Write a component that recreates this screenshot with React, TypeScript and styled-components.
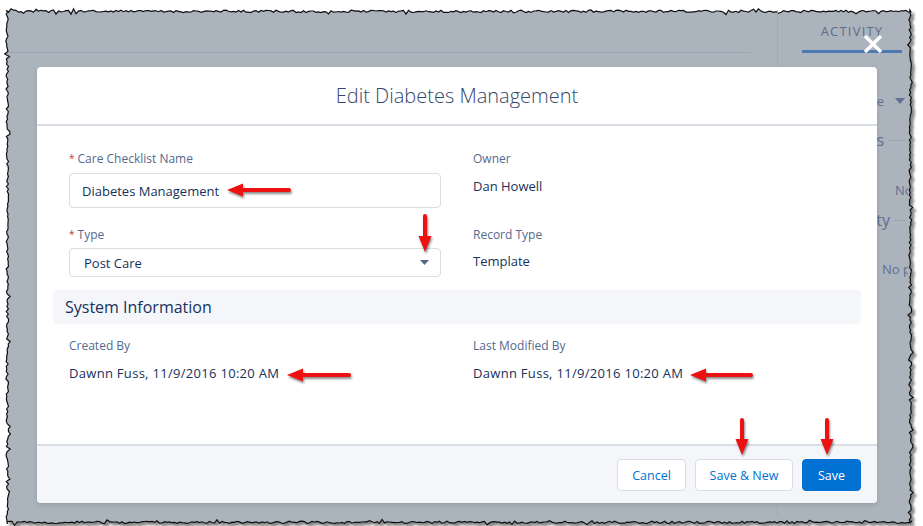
import React from 'react';
import styled, { createGlobalStyle } from 'styled-components';

const Global = createGlobalStyle`
  html, body { margin: 0; padding: 0; background: #ffffff; }
  body { font-family: "Open Sans", "Liberation Sans", sans-serif; }
  * { box-sizing: border-box; }
`;

const Page = styled.div`
  width: 923px;
  height: 526px;
  padding: 6px 11px 6px 6px;
  overflow: hidden;
`;

const Frame = styled.div`
  position: relative;
  width: 906px;
  height: 514px;
`;

const EdgeSvg = styled.svg`
  position: absolute;
  left: 0;
  top: 0;
  overflow: visible;
`;

const Screen = styled.div`
  position: relative;
  margin: 4px;
  width: 898px;
  height: 506px;
  overflow: hidden;
  display: grid;
  grid-template-columns: 767px minmax(0, 1fr);
`;

const LeftPane = styled.div`
  padding-right: 27px;
`;

const TopBand = styled.div`
  height: 43px;
  border-bottom: 1px solid #9da6b1;
`;

const RightPane = styled.div`
  min-width: 0;
  overflow: hidden;
  border-left: 1px solid #a1aab4;
  display: flex;
  flex-direction: column;
`;

const Tab = styled.div`
  margin-left: 24px;
  width: 100px;
  height: 43px;
  padding-top: 2px;
  display: flex;
  align-items: center;
  justify-content: center;
  border-bottom: 3px solid #4d7ab0;
  font-size: 13px;
  color: #5b6c89;
  letter-spacing: 1.2px;
`;

const ActRow = styled.div<{ $mt: number; $pl?: number; $end?: boolean }>`
  min-width: 0;
  margin-top: ${(p) => p.$mt}px;
  padding-left: ${(p) => p.$pl ?? 0}px;
  padding-right: 3px;
  height: 20px;
  display: flex;
  align-items: center;
  justify-content: ${(p) => (p.$end ? 'flex-end' : 'flex-start')};
  white-space: nowrap;
  color: #5f7090;
`;

const ActText = styled.span<{ $size: number }>`
  flex-shrink: 0;
  font-size: ${(p) => p.$size}px;
  line-height: 20px;
`;

const ActLine = styled.span<{ $w: number }>`
  flex-shrink: 0;
  width: ${(p) => p.$w}px;
  margin-left: 4px;
  border-top: 1px solid #9aa3ae;
`;

const Modal = styled.div`
  position: absolute;
  left: 27px;
  top: 57px;
  width: 840px;
  height: 436px;
  background: #ffffff;
  border-radius: 4px;
  display: flex;
  flex-direction: column;
  box-shadow: 0 2px 4px rgba(0, 0, 0, 0.12);
  z-index: 2;
`;

const Header = styled.div`
  height: 59px;
  flex-shrink: 0;
  border-bottom: 2px solid #d8dde6;
  display: flex;
  align-items: center;
  justify-content: center;
  font-size: 20px;
  font-weight: 300;
  color: #34476a;
`;

const Body = styled.div`
  flex: 1;
  padding: 25px 16px 0;
`;

const FieldGrid = styled.div<{ $rowGap?: number }>`
  padding: 0 16px;
  display: grid;
  grid-template-columns: 1fr 1fr;
  column-gap: 32px;
  row-gap: ${(p) => p.$rowGap ?? 19}px;
`;

const Field = styled.div`
  display: flex;
  flex-direction: column;
`;

const Label = styled.div`
  font-size: 12px;
  line-height: 16px;
  height: 16px;
  color: #54698d;
  margin-bottom: 6px;
`;

const Req = styled.span`
  display: inline-block;
  color: #c23934;
  font-size: 10px;
  line-height: 10px;
  margin-right: 3px;
  vertical-align: top;
  padding-top: 2px;
`;

const TextBox = styled.div`
  height: 35px;
  border: 1px solid #d8dde6;
  border-radius: 4px;
  padding: 0 12px;
  display: flex;
  align-items: center;
  font-size: 13px;
  color: #16325c;
`;

const SelectBox = styled.div`
  height: 29px;
  margin-top: -1px;
  border: 1px solid #d8dde6;
  border-radius: 4px;
  padding: 0 11px 0 14px;
  display: flex;
  align-items: center;
  justify-content: space-between;
  font-size: 13px;
  color: #16325c;
`;

const Value = styled.div<{ $mt?: number; $ls?: number }>`
  margin-top: ${(p) => p.$mt ?? 3}px;
  font-size: 13px;
  line-height: 20px;
  letter-spacing: ${(p) => p.$ls ?? 0}px;
  color: #16325c;
`;

const Section = styled.div`
  margin-top: 13px;
  margin-bottom: 14px;
  height: 34px;
  border-radius: 4px;
  background: #f4f6f9;
  padding-left: 12px;
  display: flex;
  align-items: center;
  font-size: 16px;
  color: #16325c;
`;

const Footer = styled.div`
  height: 59px;
  flex-shrink: 0;
  border-top: 2px solid #d8dde6;
  background: #f4f6f9;
  border-radius: 0 0 4px 4px;
  padding: 13px 16px 12px;
  display: flex;
  justify-content: flex-end;
  gap: 9px;
`;

const Button = styled.button<{ $brand?: boolean; $w: number }>`
  height: 32px;
  width: ${(p) => p.$w}px;
  border-radius: 4px;
  border: 1px solid ${(p) => (p.$brand ? '#0070d2' : '#d8dde6')};
  background: ${(p) => (p.$brand ? '#0070d2' : '#ffffff')};
  color: ${(p) => (p.$brand ? '#ffffff' : '#0070d2')};
  font-family: "Open Sans", "Liberation Sans", sans-serif;
  font-size: 12.5px;
  padding: 0;
  display: flex;
  align-items: center;
  justify-content: center;
`;

const CloseX = styled.svg`
  position: absolute;
  left: 853px;
  top: 24px;
  z-index: 3;
`;

const ArrowSvg = styled.svg<{ $x: number; $y: number }>`
  position: absolute;
  left: ${(p) => p.$x}px;
  top: ${(p) => p.$y}px;
  overflow: visible;
  z-index: 4;
  filter: drop-shadow(1px 2px 1.2px rgba(0, 0, 0, 0.45));
`;

// page coords -> screen coords offset
const OX = 10;
const OY = 10;

function LeftArrow({ tipX, tailX, y }: { tipX: number; tailX: number; y: number }) {
  const L = tailX - tipX;
  return (
    <ArrowSvg $x={tipX - OX} $y={y - OY - 7} width={L} height={14}>
      <polygon points={`0,7 16,0.5 16,13.5`} fill="#ee1111" />
      <rect x={12} y={5} width={L - 12} height={4} rx={2} fill="#ee1111" />
    </ArrowSvg>
  );
}

function DownArrow({ x, topY, tipY }: { x: number; topY: number; tipY: number }) {
  const L = tipY - topY;
  return (
    <ArrowSvg $x={x - OX - 7} $y={topY - OY} width={14} height={L}>
      <rect x={5} y={0} width={4} height={L - 12} rx={2} fill="#ee1111" />
      <polygon points={`0.5,${L - 16} 13.5,${L - 16} 7,${L}`} fill="#ee1111" />
    </ArrowSvg>
  );
}

function buildEdge(W: number, H: number) {
  let s = 12345;
  const rnd = () => {
    s = (s * 16807) % 2147483647;
    return s / 2147483647;
  };
  const j = () => {
    const r = rnd();
    if (r > 0.9) return (rnd() - 0.5) * 6;
    return (r - 0.5) * 2.6;
  };
  const pts: string[] = [];
  const step = 2.5;
  for (let x = 0; x <= W; x += step) pts.push(`${x.toFixed(1)},${(1.5 + j()).toFixed(1)}`);
  for (let y = 0; y <= H; y += step) pts.push(`${(W - 1.5 + j()).toFixed(1)},${y.toFixed(1)}`);
  for (let x = W; x >= 0; x -= step) pts.push(`${x.toFixed(1)},${(H - 1.5 + j()).toFixed(1)}`);
  for (let y = H; y >= 0; y -= step) pts.push(`${(1.5 + j()).toFixed(1)},${y.toFixed(1)}`);
  return 'M' + pts.join(' L') + ' Z';
}

const EDGE = buildEdge(906, 514);

export default function App() {
  return (
    <>
      <Global />
      <Page>
        <Frame>
          <EdgeSvg width={906} height={514} viewBox="0 0 906 514">
            <defs>
              <filter id="edgeShadow" x="-2%" y="-2%" width="104%" height="104%">
                <feDropShadow dx="3" dy="3" stdDeviation="1.2" floodColor="#000" floodOpacity="0.45" />
              </filter>
            </defs>
            <path d={EDGE} fill="#abb3bd" stroke="#111" strokeWidth={1.2} filter="url(#edgeShadow)" />
          </EdgeSvg>
          <Screen>
            <LeftPane>
              <TopBand />
            </LeftPane>
            <RightPane>
              <Tab>ACTIVITY</Tab>
              <ActRow $mt={38} $end>
                <ActText $size={13}>All Time</ActText>
                <svg width="10" height="6" viewBox="0 0 10 6" style={{ marginLeft: 11, flexShrink: 0 }}>
                  <polygon points="0,0 10,0 5,6" fill="#5f7090" />
                </svg>
              </ActRow>
              <ActRow $mt={19} $end>
                <ActText $size={16}>Next Steps</ActText>
                <ActLine $w={17} />
              </ActRow>
              <ActRow $mt={30} $pl={117}>
                <ActText $size={13}>No next steps.</ActText>
              </ActRow>
              <ActRow $mt={10} $end>
                <ActText $size={16}>Past Activity</ActText>
                <ActLine $w={11} />
              </ActRow>
              <ActRow $mt={29} $pl={104}>
                <ActText $size={13}>No past activity.</ActText>
              </ActRow>
            </RightPane>

            <CloseX width={20} height={20} viewBox="0 0 20 20">
              <path d="M2 2 L18 18 M18 2 L2 18" stroke="#ffffff" strokeWidth={3.4} strokeLinecap="butt" />
            </CloseX>

            <Modal>
              <Header>Edit Diabetes Management</Header>
              <Body>
                <FieldGrid>
                  <Field>
                    <Label>
                      <Req>*</Req>Care Checklist Name
                    </Label>
                    <TextBox>Diabetes Management</TextBox>
                  </Field>
                  <Field>
                    <Label>Owner</Label>
                    <Value $mt={3}>Dan Howell</Value>
                  </Field>
                  <Field>
                    <Label>
                      <Req>*</Req>Type
                    </Label>
                    <SelectBox>
                      <span>Post Care</span>
                      <svg width="9" height="5" viewBox="0 0 9 5">
                        <polygon points="0,0 9,0 4.5,5" fill="#54698d" />
                      </svg>
                    </SelectBox>
                  </Field>
                  <Field>
                    <Label>Record Type</Label>
                    <Value $mt={2}>Template</Value>
                  </Field>
                </FieldGrid>
                <Section>System Information</Section>
                <FieldGrid>
                  <Field>
                    <Label>Created By</Label>
                    <Value $mt={3} $ls={0.3}>Dawnn Fuss, 11/9/2016 10:20 AM</Value>
                  </Field>
                  <Field>
                    <Label>Last Modified By</Label>
                    <Value $mt={3} $ls={0.3}>Dawnn Fuss, 11/9/2016 10:20 AM</Value>
                  </Field>
                </FieldGrid>
              </Body>
              <Footer>
                <Button $w={69}>Cancel</Button>
                <Button $w={98}>Save &amp; New</Button>
                <Button $w={59} $brand>
                  Save
                </Button>
              </Footer>
            </Modal>

            <LeftArrow tipX={227} tailX={291} y={190} />
            <DownArrow x={425} topY={214} tipY={252} />
            <LeftArrow tipX={287} tailX={351} y={375} />
            <LeftArrow tipX={690} tailX={753} y={375} />
            <DownArrow x={742} topY={418} tipY={455} />
            <DownArrow x={827} topY={418} tipY={455} />
          </Screen>
        </Frame>
      </Page>
    </>
  );
}
